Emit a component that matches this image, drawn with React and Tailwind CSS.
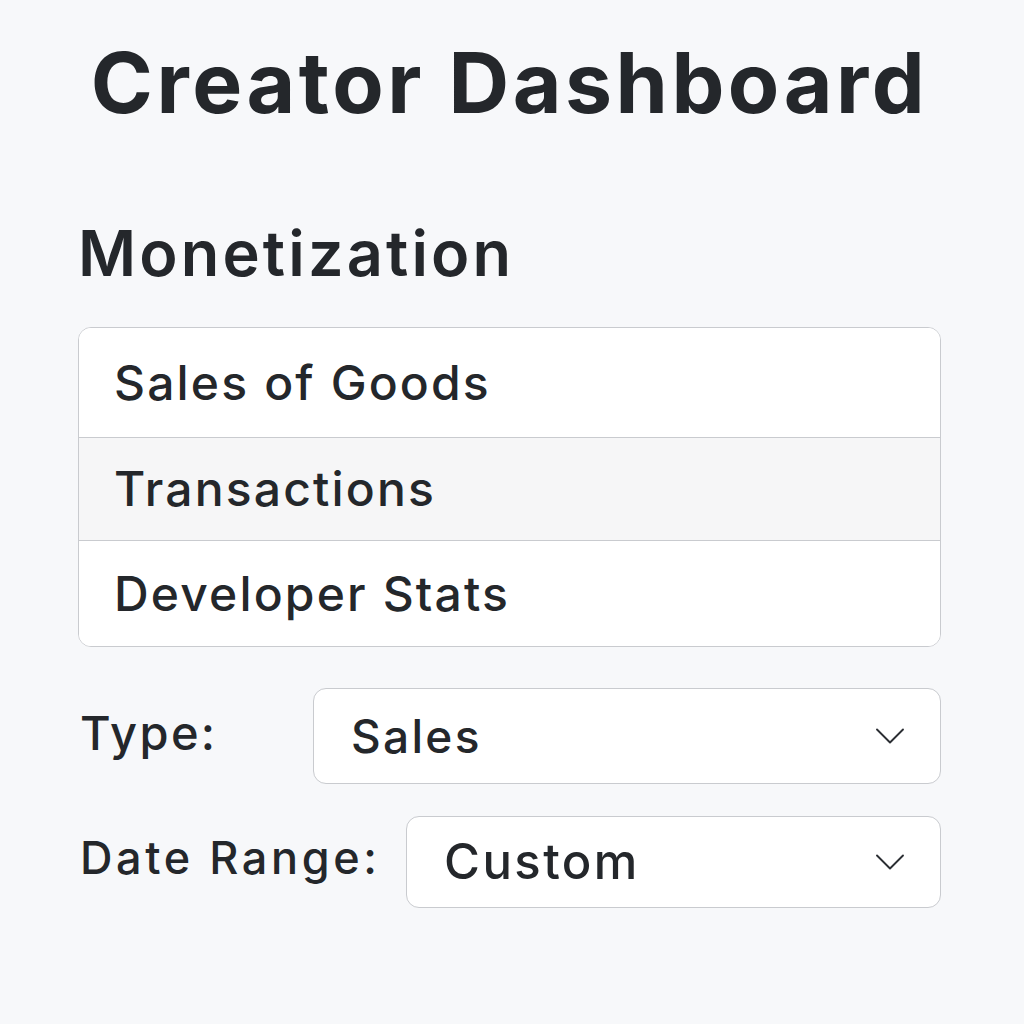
const sections = [
  { label: "Sales of Goods", active: false, h: "h-[109px]" },
  { label: "Transactions", active: true, h: "h-[103px]" },
  { label: "Developer Stats", active: false, h: "h-[106px]" },
];

function Chevron() {
  return (
    <svg width="30" height="18" viewBox="0 0 30 18" fill="none" className="shrink-0">
      <path d="M2 2.5 L15 15.5 L28 2.5" stroke="#2b2e33" strokeWidth="1.9" strokeLinecap="round" strokeLinejoin="round" />
    </svg>
  );
}

function Select({ value, className, textClass }) {
  return (
    <div
      className={`flex items-center justify-between rounded-[13px] border border-[#c9cbcf] bg-white pl-[37px] pr-[35px] ${className}`}
    >
      <span className={`font-medium tracking-[0.05em] text-[#24272b] ${textClass}`}>{value}</span>
      <Chevron />
    </div>
  );
}

export default function App() {
  return (
    <div
      className="min-h-[1024px] w-full bg-[#f7f8fa] text-[#24272b]"
      style={{ fontFamily: "Inter, 'Noto Sans', sans-serif" }}
    >
      <div className="ml-[78px] w-[863px] pt-[41px]">
        <h1 className="text-center text-[84px] font-bold leading-none tracking-[0.042em]">
          Creator Dashboard
        </h1>

        <h2 className="mt-[97px] text-[63px] font-semibold leading-none tracking-[0.05em]">
          Monetization
        </h2>

        <div className="mt-[42px] overflow-hidden rounded-[13px] border border-[#c9cbcf] bg-white">
          {sections.map((s, i) => (
            <div
              key={s.label}
              className={`flex items-center px-[35px] text-[48px] font-medium tracking-[0.045em] ${s.h} ${
                i > 0 ? "border-t border-[#c9cbcf]" : ""
              } ${s.active ? "bg-[#f6f6f7]" : "bg-white"}`}
            >
              {s.label}
            </div>
          ))}
        </div>

        <div className="mt-[41px] flex items-start">
          <div className="w-[235px] pl-[2px] pt-[21px] text-[47px] font-medium leading-none tracking-[0.05em]">
            Type:
          </div>
          <Select value="Sales" className="h-[96px] flex-1" textClass="text-[46px]" />
        </div>

        <div className="mt-[32px] flex items-start">
          <div className="w-[328px] pl-[2px] pt-[19px] text-[45px] font-medium leading-none tracking-[0.08em]">
            Date Range:
          </div>
          <Select value="Custom" className="h-[92px] flex-1" textClass="text-[49px]" />
        </div>
      </div>
    </div>
  );
}
